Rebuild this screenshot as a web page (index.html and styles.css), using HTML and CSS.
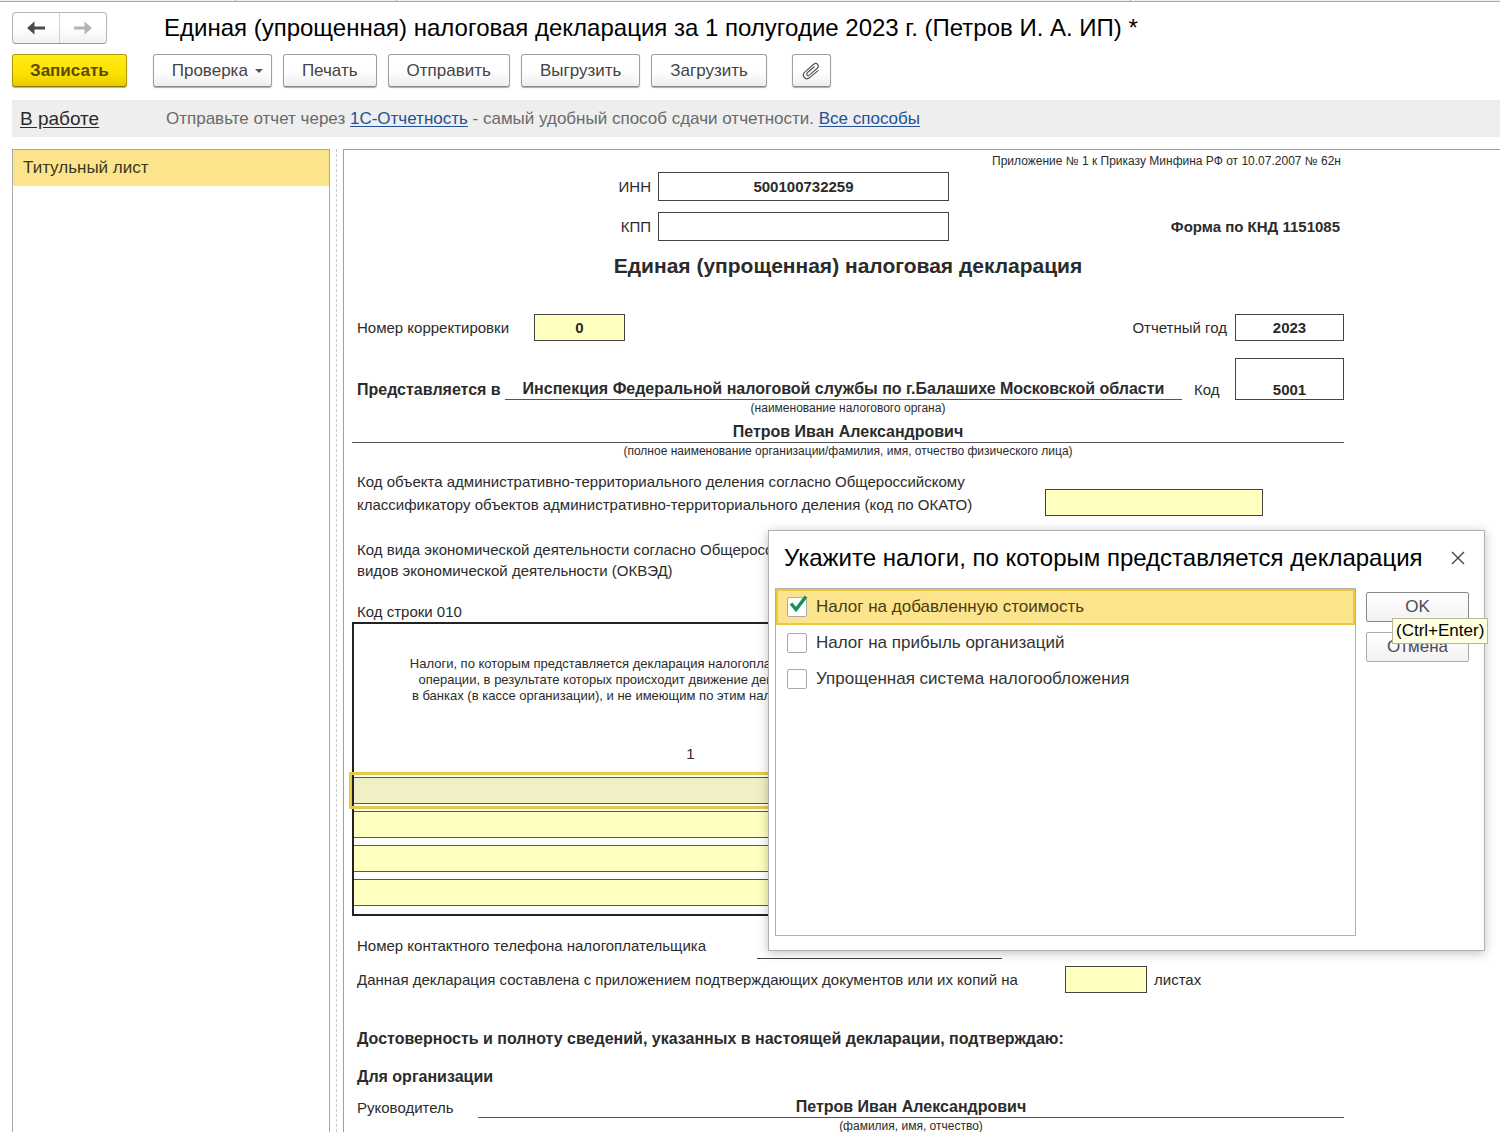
FILE: index.html
```html
<!DOCTYPE html>
<html lang="ru">
<head>
<meta charset="utf-8">
<meta name="viewport" content="width=device-width, initial-scale=1">
<title>Единая (упрощенная) налоговая декларация</title>
<link rel="stylesheet" href="styles.css">
</head>
<body>
<div class="app">
  <div class="tabs"><span class="tab tab-first"></span><span class="tab tab-second"></span><span class="tab tab-rest"></span></div>
  <header class="head">
    <nav class="history" aria-label="История">
      <button type="button" class="history-btn" aria-label="Назад">
        <svg width="20" height="14" viewBox="0 0 20 14"><path d="M1 7 L8.500 0.500 L8.500 5.400 H19 V8.600 H8.500 V13.500 Z" fill="#4a4a4a"/></svg>
      </button>
      <button type="button" class="history-btn" aria-label="Вперед">
        <svg width="20" height="14" viewBox="0 0 20 14"><path d="M19 7 L11.500 0.500 V5.400 H1 V8.600 H11.500 V13.500 Z" fill="#b3b3b3"/></svg>
      </button>
    </nav>
    <h1 class="title">Единая (упрощенная) налоговая декларация за 1 полугодие 2023 г. (Петров И. А. ИП) *</h1>
  </header>
  <div class="toolbar">
    <button type="button" class="btn btn-primary">Записать</button>
    <button type="button" class="btn btn-menu">Проверка <span class="caret"></span></button>
    <button type="button" class="btn">Печать</button>
    <button type="button" class="btn">Отправить</button>
    <button type="button" class="btn">Выгрузить</button>
    <button type="button" class="btn">Загрузить</button>
    <button type="button" class="btn btn-clip" aria-label="Файлы">
      <svg width="20" height="20" viewBox="0 0 20 20" fill="none" stroke="#555" stroke-width="1.200" stroke-linecap="round" stroke-linejoin="round"><path d="M13 6 L6.300 11.800 C4.600 13.600 6.600 15.600 8.400 14.100 L16.200 7.300 C19 4.500 15.700 0.800 12.700 3.200 L4 10.900 C0 14.700 4.300 19.900 8.700 16.600 L17 9.600"/></svg>
    </button>
  </div>
  <div class="status">
    <a class="state" href="#">В работе</a>
    <p class="hint">Отправьте отчет через <a class="link" href="#">1С-Отчетность</a> - самый удобный способ сдачи отчетности. <a class="link" href="#">Все способы</a></p>
  </div>
  <main class="main">
    <aside class="sections"><a class="section" href="#">Титульный лист</a></aside>
    <div class="splitter"></div>
    <div class="sheet">
      <form class="form">
        <p class="order">Приложение № 1 к Приказу Минфина РФ от 10.07.2007 № 62н</p>
        <div class="idrow"><label class="idlabel" for="inn">ИНН</label><input class="box idbox" id="inn" value="500100732259"></div>
        <div class="idrow"><label class="idlabel" for="kpp">КПП</label><input class="box idbox" id="kpp"><strong class="knd">Форма по КНД 1151085</strong></div>
        <h2 class="formtitle">Единая (упрощенная) налоговая декларация</h2>
        <div class="row row-period">
          <label class="corr" for="corr">Номер корректировки</label><input class="box fill corrbox" id="corr" value="0">
          <label class="right" for="year">Отчетный год</label><input class="box code" id="year" value="2023">
        </div>
        <div class="row row-org">
          <strong class="to">Представляется в</strong>
          <span class="line office">Инспекция Федеральной налоговой службы по г.Балашихе Московской области</span>
          <label class="codelabel" for="code">Код</label><input class="box code code-tall" id="code" value="5001">
        </div>
        <p class="caption caption-office">(наименование налогового органа)</p>
        <p class="line person">Петров Иван Александрович</p>
        <p class="caption">(полное наименование организации/фамилия, имя, отчество физического лица)</p>
        <div class="row row-okato">
          <label class="okato" for="okato">Код объекта административно-территориального деления согласно Общероссийскому<br>классификатору объектов административно-территориального деления (код по ОКАТО)</label>
          <input class="box fill okatobox" id="okato">
        </div>
        <p class="okved">Код вида экономической деятельности согласно Общероссийскому классификатору<br>видов экономической деятельности (ОКВЭД)</p>
        <p class="linecode">Код строки 010</p>
        <table class="taxes">
          <thead>
            <tr><th class="taxhead" scope="col">Налоги, по которым представляется декларация налогоплательщиком, не осуществляющим<br>операции, в результате которых происходит движение денежных средств на своих счетах<br>в банках (в кассе организации), и не имеющим по этим налогам объектов налогообложения</th><th></th></tr>
            <tr><td class="taxnum">1</td><td></td></tr>
          </thead>
          <tbody>
            <tr><td class="taxcell" colspan="2"><input class="tax tax-current" aria-label="Налог 1"></td></tr>
            <tr><td class="taxcell" colspan="2"><input class="tax" aria-label="Налог 2"></td></tr>
            <tr><td class="taxcell" colspan="2"><input class="tax" aria-label="Налог 3"></td></tr>
            <tr><td class="taxcell taxcell-last" colspan="2"><input class="tax" aria-label="Налог 4"></td></tr>
          </tbody>
        </table>
        <div class="row row-phone"><label class="phonelabel" for="phone">Номер контактного телефона налогоплательщика</label><input class="phone" id="phone" type="tel"></div>
        <div class="row row-pages"><label class="pageslabel" for="pages">Данная декларация составлена с приложением подтверждающих документов или их копий на</label><input class="box fill pages" id="pages"><span>листах</span></div>
        <h3 class="subhead confirm">Достоверность и полноту сведений, указанных в настоящей декларации, подтверждаю:</h3>
        <h3 class="subhead">Для организации</h3>
        <div class="row row-head"><span class="chief">Руководитель</span><span class="line chiefname">Петров Иван Александрович</span></div>
        <p class="caption caption-chief">(фамилия, имя, отчество)</p>
      </form>
    </div>
  </main>
  <section class="dialog" role="dialog" aria-labelledby="dialog-title">
    <header class="dialog-head">
      <h2 class="dialog-title" id="dialog-title">Укажите налоги, по которым представляется декларация</h2>
      <button type="button" class="close" aria-label="Закрыть"><svg width="14" height="14" viewBox="0 0 14 14" stroke="#444" stroke-width="1.400"><path d="M1 1 L13 13 M13 1 L1 13"/></svg></button>
    </header>
    <div class="dialog-body">
      <div class="list">
        <label class="option option-current"><input class="check" type="checkbox" checked><svg class="mark" width="20" height="20" viewBox="0 0 20 20" fill="none" stroke="#17915a" stroke-width="3.400"><path d="M3 8.500 L8 14.500 L18 1.500"/></svg>Налог на добавленную стоимость</label>
        <label class="option"><input class="check" type="checkbox">Налог на прибыль организаций</label>
        <label class="option"><input class="check" type="checkbox">Упрощенная система налогообложения</label>
      </div>
      <div class="actions">
        <button type="button" class="action action-ok">OK</button>
        <button type="button" class="action">Отмена</button>
        <span class="tip" role="tooltip">(Ctrl+Enter)</span>
      </div>
    </div>
  </section>
</div>
</body>
</html>
```
FILE: styles.css
```css
* { box-sizing: border-box; }
body { margin: 0; background: #fff; color: #2b2b2b; font: 15px/20px "Liberation Sans", Arial, sans-serif; }
h1, h2, h3, p { margin: 0; }
button, input { margin: 0; font: inherit; color: inherit; }
input { border-radius: 0; outline: 0; }
.app { position: relative; display: flex; flex-direction: column; height: 100vh; overflow: hidden; }

/* bottom edge of the window tabs */
.tabs { display: flex; flex: none; height: 2px; background: #f0f0f0; border-bottom: 1px solid #a8a8a8; }
.tab { border-right: 1px solid #a8a8a8; }
.tab-first { width: 236px; }
.tab-second { width: 161px; }
.tab-rest { width: 734px; }

.head { display: flex; flex: none; gap: 57px; padding: 10px 12px 0; height: 52px; }
.history { display: flex; height: 32px; border: 1px solid #b4b4b4; border-bottom-color: #999; border-radius: 4px; background: linear-gradient(#fff 50%, #f0f0f0); }
.history-btn { display: grid; place-items: center; width: 46px; padding: 0; border: 0; background: none; }
.history-btn + .history-btn { width: 47px; border-left: 1px solid #d0d0d0; }
.title { color: #000; font-size: 24px; font-weight: 400; line-height: 32px; white-space: nowrap; }

.toolbar { display: flex; flex: none; gap: 11px; padding: 0 12px; height: 46px; }
.btn { display: flex; align-items: center; justify-content: center; height: 33px; padding: 0 18px; border: 1px solid #a0a0a0; border-bottom-color: #8a8a8a; border-radius: 3px; background: linear-gradient(#fff 50%, #eee); box-shadow: 0 1px 1px #aaa; color: #444; font-size: 17px; white-space: nowrap; }
.btn-primary { margin-right: 15px; padding: 0 17px; border-color: #b39a00 #b39a00 #8f7c00; background: linear-gradient(#ffec1c, #fde000 60%, #e8cb00); color: #574c00; font-weight: 700; }
.btn-menu { gap: 7px; padding: 0 8px 0 18px; }
.caret { border: 4px solid transparent; border-top-color: #555; border-bottom: 0; }
.btn-clip { width: 39px; margin-left: 14px; padding: 0; }

.status { display: flex; flex: none; align-items: center; height: 37px; margin-left: 12px; padding-left: 8px; background: #eee; white-space: nowrap; }
.state { width: 146px; color: #2b2b2b; font-size: 19px; text-underline-offset: 2px; }
.hint { color: #6a6a6a; font-size: 17px; }
.link { color: #24509a; text-underline-offset: 2px; }

.main { display: flex; flex: 1; min-height: 0; margin-top: 12px; padding-left: 12px; }
.sections { flex: none; width: 318px; border: 1px solid #a8a8a8; border-bottom: 0; }
.section { display: block; height: 36px; padding-left: 10px; background: #fce48c; color: #3d3620; font-size: 17px; line-height: 36px; text-decoration: none; }
.splitter { flex: none; width: 7px; border-right: 1px dashed #ccc; margin-right: 6px; }
.sheet { flex: 1; min-width: 0; border: 1px solid #a0a0a0; border-width: 1px 0 0 1px; padding-left: 8px; overflow: hidden; }
.form { max-width: 992px; }
.order { padding-right: 3px; font-size: 12px; line-height: 22px; text-align: right; }
.idrow { display: flex; align-items: center; margin-bottom: 11px; }
.idlabel { width: 299px; margin-right: 7px; text-align: right; }
.box { height: 27px; padding: 0; border: 1px solid #444; background: #fff; font-weight: 700; text-align: center; }
.fill { background: #ffffbf; }
.idbox { width: 291px; height: 29px; }
.knd { margin-left: auto; padding-right: 4px; }
.formtitle { margin-top: -11px; font-size: 21px; line-height: 50px; text-align: center; }
.row { display: flex; align-items: center; padding-left: 5px; }
.row-period { margin-top: 23px; }
.corr { width: 177px; }
.corrbox { width: 91px; }
.right { margin-left: auto; margin-right: 8px; }
.code { width: 109px; }
.row-org { align-items: flex-end; margin-top: 17px; }
.to { width: 148px; font-size: 16px; }
.line { border-bottom: 1px solid #555; font-size: 16px; font-weight: 700; text-align: center; }
.office { flex: 1; }
.codelabel { width: 53px; padding-left: 12px; }
.code-tall { height: 42px; padding-top: 20px; }
.caption { font-size: 12px; line-height: 16px; text-align: center; }
.person { padding-top: 6px; }
.row-okato { align-items: flex-end; margin-top: 11px; }
.okato { width: 688px; line-height: 23px; white-space: nowrap; }
.okatobox { width: 218px; }
.okved { margin-top: 23px; padding-left: 5px; line-height: 21px; }
.linecode { margin-top: 21px; padding-left: 5px; }

.taxes { width: 100%; border-collapse: collapse; border: 2px solid #222; table-layout: fixed; }
.taxhead { width: 674px; height: 120px; padding: 0 0 8px; font-size: 13px; font-weight: 400; line-height: 16px; white-space: nowrap; }
.taxnum { height: 34px; padding: 0 0 12px; text-align: center; }
.taxcell { height: 34px; padding: 0; vertical-align: top; }
.taxcell-last { height: 36px; }
.tax { display: block; width: 100%; height: 27px; border: 1px solid #555; border-width: 1px 0; background: #ffffbf; }
.tax-current { background: #f0f0c4; outline: 3px solid #e2cc48; outline-offset: 2px; }

.row-phone { align-items: flex-end; margin-top: 16px; }
.phonelabel { width: 400px; padding-bottom: 3px; }
.phone { width: 245px; height: 27px; border: 0; border-bottom: 1px solid #444; background: none; }
.row-pages { margin-top: 7px; white-space: nowrap; }
.pageslabel { width: 708px; }
.pages { width: 82px; margin-right: 7px; }
.subhead { margin-top: 18px; padding-left: 5px; font-size: 16px; line-height: 20px; }
.confirm { margin-top: 36px; }
.row-head { margin-top: 10px; }
.chief { width: 121px; }
.chiefname { flex: 1; }
.caption-chief { padding-left: 126px; }

.dialog { position: absolute; top: 530px; right: 15px; width: 717px; border: 1px solid #b0b0b0; background: #fff; box-shadow: 0 2px 10px rgba(0, 0, 0, .25); }
.dialog-head { display: flex; align-items: center; justify-content: space-between; height: 57px; padding: 0 17px 3px 15px; }
.dialog-title { color: #000; font-size: 24px; font-weight: 400; line-height: 32px; white-space: nowrap; }
.close { display: grid; place-items: center; width: 18px; height: 18px; padding: 0; border: 0; background: none; }
.dialog-body { display: flex; gap: 10px; padding: 0 15px 14px 6px; }
.list { flex: 1; height: 348px; border: 1px solid #b0b0b0; }
.option { position: relative; display: flex; align-items: center; gap: 9px; height: 36px; padding-left: 11px; color: #333; font-size: 17px; }
.option-current { background: #fce48c; box-shadow: inset 0 0 0 2px #eaca3c; color: #4a3c10; }
.check { appearance: none; width: 20px; height: 20px; border: 1px solid #aaa; border-radius: 2px; background: #fff; }
.mark { position: absolute; left: 12px; top: 6px; }
.actions { position: relative; display: flex; flex-direction: column; gap: 10px; width: 103px; padding-top: 4px; }
.action { height: 30px; padding: 0; border: 1px solid #aaa; border-radius: 2px; background: linear-gradient(#fff, #f2f2f2); color: #4a4a55; font-size: 17px; }
.action-ok { border-color: #888; }
.tip { position: absolute; left: 26px; top: 30px; padding: 2px 3px; border: 1px solid #b8b898; background: #ffffe1; color: #000; font-size: 17px; }
```
